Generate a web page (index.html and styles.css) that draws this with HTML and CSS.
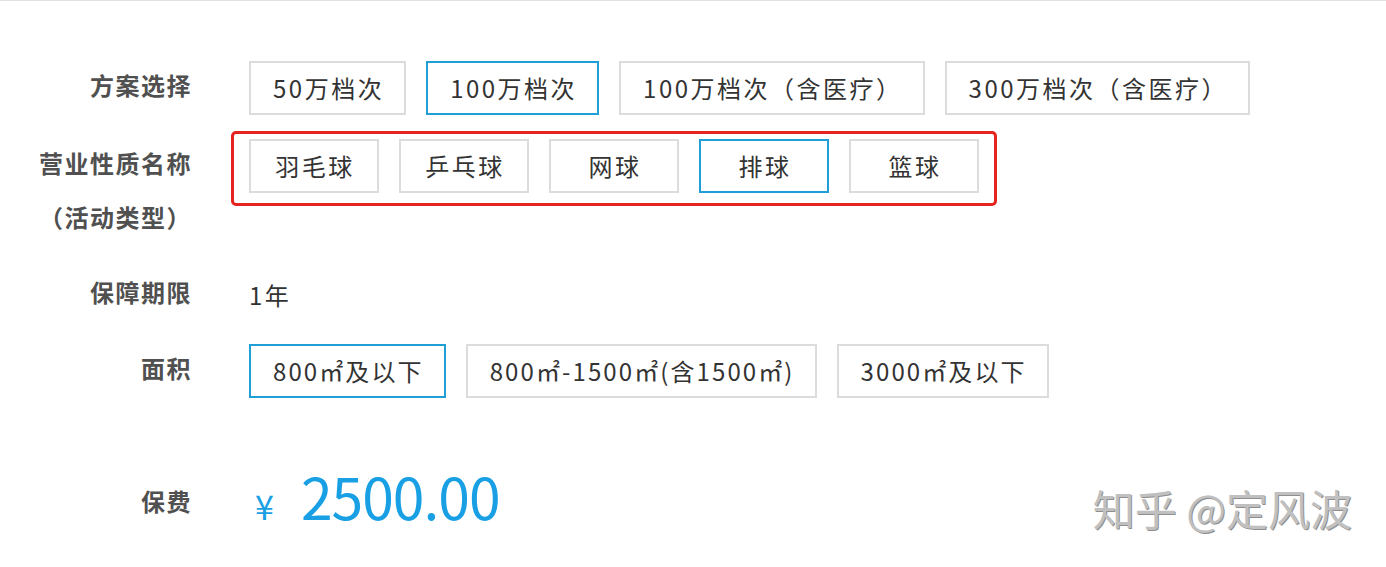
FILE: index.html
```html
<!DOCTYPE html>
<html lang="zh-CN">
<head>
<meta charset="utf-8">
<title>方案选择</title>
<link rel="stylesheet" href="styles.css">
</head>
<body>
<div class="page">
  <div class="form">
    <div class="row">
      <div class="label">方案选择</div>
      <div class="options">
        <span class="opt">50万档次</span>
        <span class="opt active">100万档次</span>
        <span class="opt">100万档次（含医疗）</span>
        <span class="opt">300万档次（含医疗）</span>
      </div>
    </div>
    <div class="row row-type">
      <div class="label label-multi">营业性质名称<br>（活动类型）</div>
      <div class="options highlight">
        <span class="opt fixed">羽毛球</span>
        <span class="opt fixed">乒乓球</span>
        <span class="opt fixed">网球</span>
        <span class="opt fixed active">排球</span>
        <span class="opt fixed">篮球</span>
      </div>
    </div>
    <div class="row row-term">
      <div class="label">保障期限</div>
      <div class="value">1年</div>
    </div>
    <div class="row row-area">
      <div class="label">面积</div>
      <div class="options area-options">
        <span class="opt active">800㎡及以下</span>
        <span class="opt">800㎡-1500㎡(含1500㎡)</span>
        <span class="opt">3000㎡及以下</span>
      </div>
    </div>
    <div class="row row-price">
      <div class="label">保费</div>
      <div class="price"><span class="yen">¥</span><span class="amount">2500.00</span></div>
    </div>
  </div>
  <div class="mark">知乎 @定风波</div>
</div>
</body>
</html>
```
FILE: styles.css
```css
html, body {
  margin: 0;
  padding: 0;
  background: #ffffff;
}
body {
  font-family: "Noto Sans CJK SC", "Noto Sans", sans-serif;
  color: #333333;
}
.page {
  position: relative;
  width: 1386px;
  height: 567px;
  border-top: 1px solid #e2e2e2;
  box-sizing: border-box;
  overflow: hidden;
}
.form {
  padding-top: 60px;
  display: flex;
  flex-direction: column;
}
.row {
  display: flex;
  align-items: flex-start;
}
.label {
  width: 192px;
  flex: none;
  text-align: right;
  font-size: 24px;
  font-weight: bold;
  letter-spacing: 1.5px;
  color: #505050;
  line-height: 54px;
  margin-right: 57px;
  margin-top: -3px;
}
.label-multi {
  padding-top: 8px;
}
.options {
  display: flex;
  gap: 20px;
}
.opt {
  display: block;
  box-sizing: border-box;
  height: 54px;
  line-height: 50px;
  padding: 0 20px 0 22px;
  border: 2px solid #dcdcdc;
  font-size: 24px;
  letter-spacing: 2.5px;
  color: #333333;
  white-space: nowrap;
  text-align: center;
}
.opt.fixed {
  width: 130px;
  padding: 0 0 0 2px;
}
.opt.active {
  border-color: #1f9fd6;
}
.area-options .opt {
  letter-spacing: 2.1px;
}
.highlight {
  margin-left: -18px;
  border: 3px solid #e5231f;
  border-radius: 5px;
  padding: 5px 15px 10px;
}
.row-type {
  margin-top: 16px;
}
.row-term {
  margin-top: 24px;
}
.value {
  font-size: 24px;
  letter-spacing: 2.5px;
  line-height: 54px;
  color: #333333;
}
.row-area {
  margin-top: 22px;
}
.row-price {
  margin-top: 62px;
  align-items: center;
}
.row-price .label {
  margin-top: 0;
}
.price {
  display: flex;
  align-items: baseline;
  color: #19a0e4;
  line-height: 70px;
}
.yen {
  font-size: 34px;
  margin-left: 6px;
  margin-right: 27px;
}
.amount {
  font-size: 57px;
  letter-spacing: -1px;
}
.mark {
  position: absolute;
  right: 34px;
  top: 476px;
  font-size: 42px;
  letter-spacing: 0;
  color: #c0c0c0;
  text-shadow: 1px 1px 0 #8f8f8f;
  white-space: nowrap;
}
```
